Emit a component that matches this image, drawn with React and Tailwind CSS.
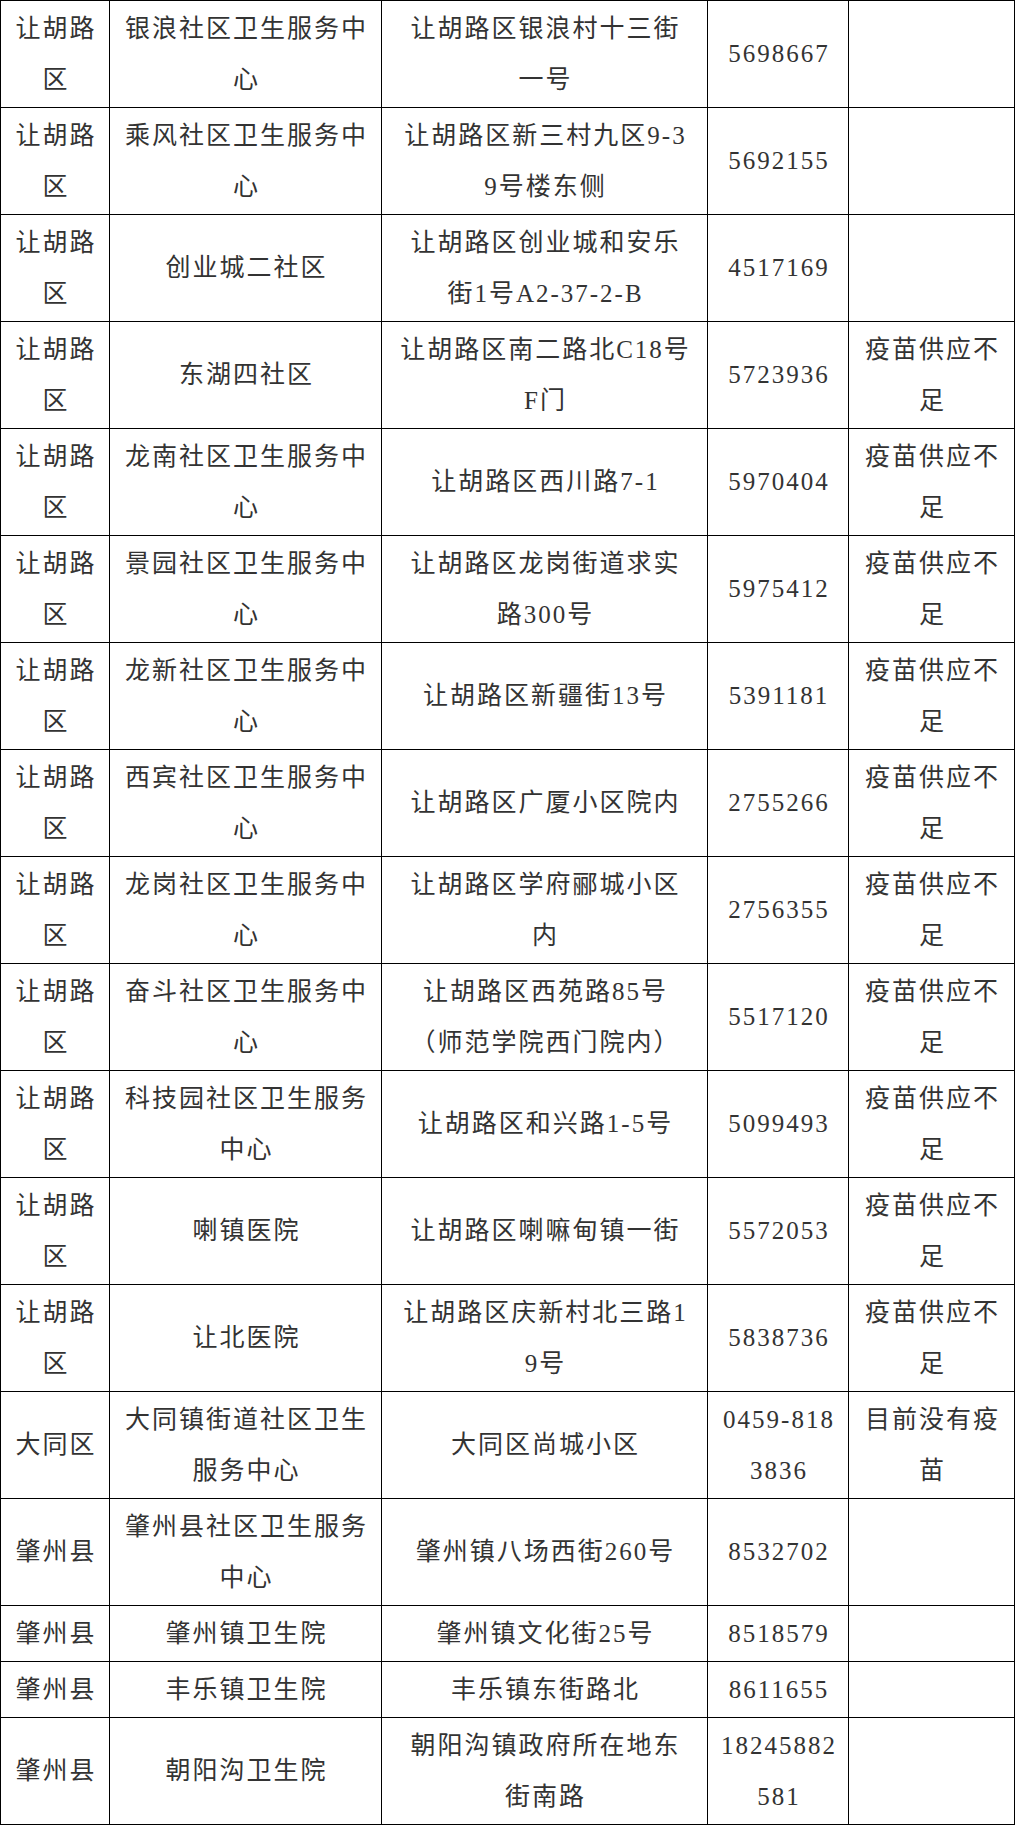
import React from 'react';

const NOTE = ['疫苗供应不', '足'];

const rows = [
  { h: 'tall', cells: [['让胡路', '区'], ['银浪社区卫生服务中', '心'], ['让胡路区银浪村十三街', '一号'], ['5698667'], []] },
  { h: 'tall', cells: [['让胡路', '区'], ['乘风社区卫生服务中', '心'], ['让胡路区新三村九区9-3', '9号楼东侧'], ['5692155'], []] },
  { h: 'tall', cells: [['让胡路', '区'], ['创业城二社区'], ['让胡路区创业城和安乐', '街1号A2-37-2-B'], ['4517169'], []] },
  { h: 'tall', cells: [['让胡路', '区'], ['东湖四社区'], ['让胡路区南二路北C18号', 'F门'], ['5723936'], NOTE] },
  { h: 'tall', cells: [['让胡路', '区'], ['龙南社区卫生服务中', '心'], ['让胡路区西川路7-1'], ['5970404'], NOTE] },
  { h: 'tall', cells: [['让胡路', '区'], ['景园社区卫生服务中', '心'], ['让胡路区龙岗街道求实', '路300号'], ['5975412'], NOTE] },
  { h: 'tall', cells: [['让胡路', '区'], ['龙新社区卫生服务中', '心'], ['让胡路区新疆街13号'], ['5391181'], NOTE] },
  { h: 'tall', cells: [['让胡路', '区'], ['西宾社区卫生服务中', '心'], ['让胡路区广厦小区院内'], ['2755266'], NOTE] },
  { h: 'tall', cells: [['让胡路', '区'], ['龙岗社区卫生服务中', '心'], ['让胡路区学府郦城小区', '内'], ['2756355'], NOTE] },
  { h: 'tall', cells: [['让胡路', '区'], ['奋斗社区卫生服务中', '心'], ['让胡路区西苑路85号', '（师范学院西门院内）'], ['5517120'], NOTE] },
  { h: 'tall', cells: [['让胡路', '区'], ['科技园社区卫生服务', '中心'], ['让胡路区和兴路1-5号'], ['5099493'], NOTE] },
  { h: 'tall', cells: [['让胡路', '区'], ['喇镇医院'], ['让胡路区喇嘛甸镇一街'], ['5572053'], NOTE] },
  { h: 'tall', cells: [['让胡路', '区'], ['让北医院'], ['让胡路区庆新村北三路1', '9号'], ['5838736'], NOTE] },
  { h: 'tall', cells: [['大同区'], ['大同镇街道社区卫生', '服务中心'], ['大同区尚城小区'], ['0459-818', '3836'], ['目前没有疫', '苗']] },
  { h: 'tall', cells: [['肇州县'], ['肇州县社区卫生服务', '中心'], ['肇州镇八场西街260号'], ['8532702'], []] },
  { h: 'short', cells: [['肇州县'], ['肇州镇卫生院'], ['肇州镇文化街25号'], ['8518579'], []] },
  { h: 'short', cells: [['肇州县'], ['丰乐镇卫生院'], ['丰乐镇东街路北'], ['8611655'], []] },
  { h: 'tall', cells: [['肇州县'], ['朝阳沟卫生院'], ['朝阳沟镇政府所在地东', '街南路'], ['18245882', '581'], []] },
];

const widths = ['w-[109px]', 'w-[272px]', 'w-[326px]', 'w-[141px]', 'w-[166px]'];

const Cell = ({ lines, width }) => (
  <div className={`${width} shrink-0 border-r border-b border-black flex flex-col items-center justify-center`}>
    {lines.map((line, i) => (
      <div key={i} className="whitespace-nowrap leading-[51.5px] tracking-[2px] pl-[2px]">
        {line}
      </div>
    ))}
  </div>
);

export default function App() {
  return (
    <div className="bg-white min-h-screen">
      <div
        className="w-[1015px] border-l border-t border-black text-[25px] text-[#333333]"
        style={{ fontFamily: '"Liberation Serif", "Noto Sans CJK SC", serif' }}
      >
        {rows.map((row, r) => (
          <div key={r} className={`flex ${row.h === 'tall' ? 'h-[107px]' : 'h-[56px]'}`}>
            {row.cells.map((lines, c) => (
              <Cell key={c} lines={lines} width={widths[c]} />
            ))}
          </div>
        ))}
      </div>
    </div>
  );
}
